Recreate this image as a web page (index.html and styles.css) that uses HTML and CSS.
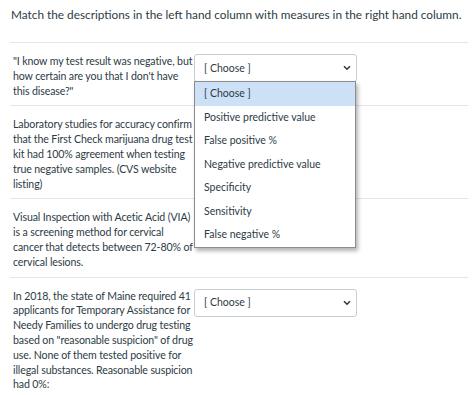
FILE: index.html
```html
<!DOCTYPE html>
<html lang="en">
<head>
  <meta charset="UTF-8">
  <title>Matching question</title>
  <link rel="stylesheet" href="styles.css">
</head>
<body>
  <div class="pregunta">
    <p class="enunciado">Match the descriptions in the left hand column with measures in the right hand column.</p>

    <div class="fila">
      <div class="descripcion">"I know my test result was negative, but how certain are you that I don't have this disease?"</div>
      <div class="respuesta">
        <div class="selector">
          <span>[ Choose ]</span>
          <svg class="flecha" width="8" height="6" viewBox="0 0 8 6"><path d="M1 1.2 L4 4.2 L7 1.2" fill="none" stroke="#2d3b45" stroke-width="1.6"/></svg>
        </div>
        <ul class="opciones">
          <li class="activa">[ Choose ]</li>
          <li>Positive predictive value</li>
          <li>False positive %</li>
          <li>Negative predictive value</li>
          <li>Specificity</li>
          <li>Sensitivity</li>
          <li>False negative %</li>
        </ul>
      </div>
    </div>

    <div class="fila">
      <div class="descripcion">Laboratory studies for accuracy confirm that the First Check marijuana drug test kit had 100% agreement when testing true negative samples. (CVS website listing)</div>
      <div class="respuesta"></div>
    </div>

    <div class="fila">
      <div class="descripcion">Visual Inspection with Acetic Acid (VIA) is a screening method for cervical cancer that detects between 72-80% of cervical lesions.</div>
      <div class="respuesta"></div>
    </div>

    <div class="fila ultima">
      <div class="descripcion">In 2018, the state of Maine required 41 applicants for Temporary Assistance for Needy Families to undergo drug testing based on "reasonable suspicion" of drug use. None of them tested positive for illegal substances. Reasonable suspicion had 0%:</div>
      <div class="respuesta">
        <div class="selector">
          <span>[ Choose ]</span>
          <svg class="flecha" width="8" height="6" viewBox="0 0 8 6"><path d="M1 1.2 L4 4.2 L7 1.2" fill="none" stroke="#2d3b45" stroke-width="1.6"/></svg>
        </div>
      </div>
    </div>
  </div>
</body>
</html>
```

FILE: styles.css
```css
body {
  margin: 0;
  background: #fff;
  color: #2d3b45;
  font-family: Lato, "Liberation Sans", sans-serif;
}

.pregunta {
  padding: 0 6px 0 10px;
}

.enunciado {
  margin: 0;
  padding: 6px 0 0 1px;
  height: 36px;
  font-size: 11.8px;
  line-height: 17px;
  white-space: nowrap;
  border-bottom: 1px solid #e3e5e7;
}

.fila {
  display: flex;
  gap: 1px;
  padding: 11px 0 7px 3px;
  border-bottom: 1px solid #e3e5e7;
  font-size: 10.6px;
  line-height: 14.8px;
}

.fila.ultima {
  border-bottom: none;
}

.descripcion {
  width: 180px;
  flex-shrink: 0;
  letter-spacing: -0.12px;
}

.respuesta {
  position: relative;
  width: 163px;
  font-size: 10.5px;
}

.selector {
  display: flex;
  align-items: center;
  justify-content: space-between;
  height: 26px;
  padding: 0 5px 0 9px;
  border: 1px solid #c7cdd1;
  border-radius: 3px;
  background: #fff;
}

.opciones {
  position: absolute;
  top: 27px;
  left: 0;
  width: 160px;
  margin: 0;
  padding: 0;
  list-style: none;
  background: #fff;
  border: 1px solid #8c8c8c;
  box-shadow: 2px 3px 4px rgba(0, 0, 0, 0.3);
  z-index: 10;
}

.opciones li {
  height: 23.5px;
  line-height: 23.5px;
  padding-left: 9px;
}

.opciones li.activa {
  background: #cce0f6;
}
```
